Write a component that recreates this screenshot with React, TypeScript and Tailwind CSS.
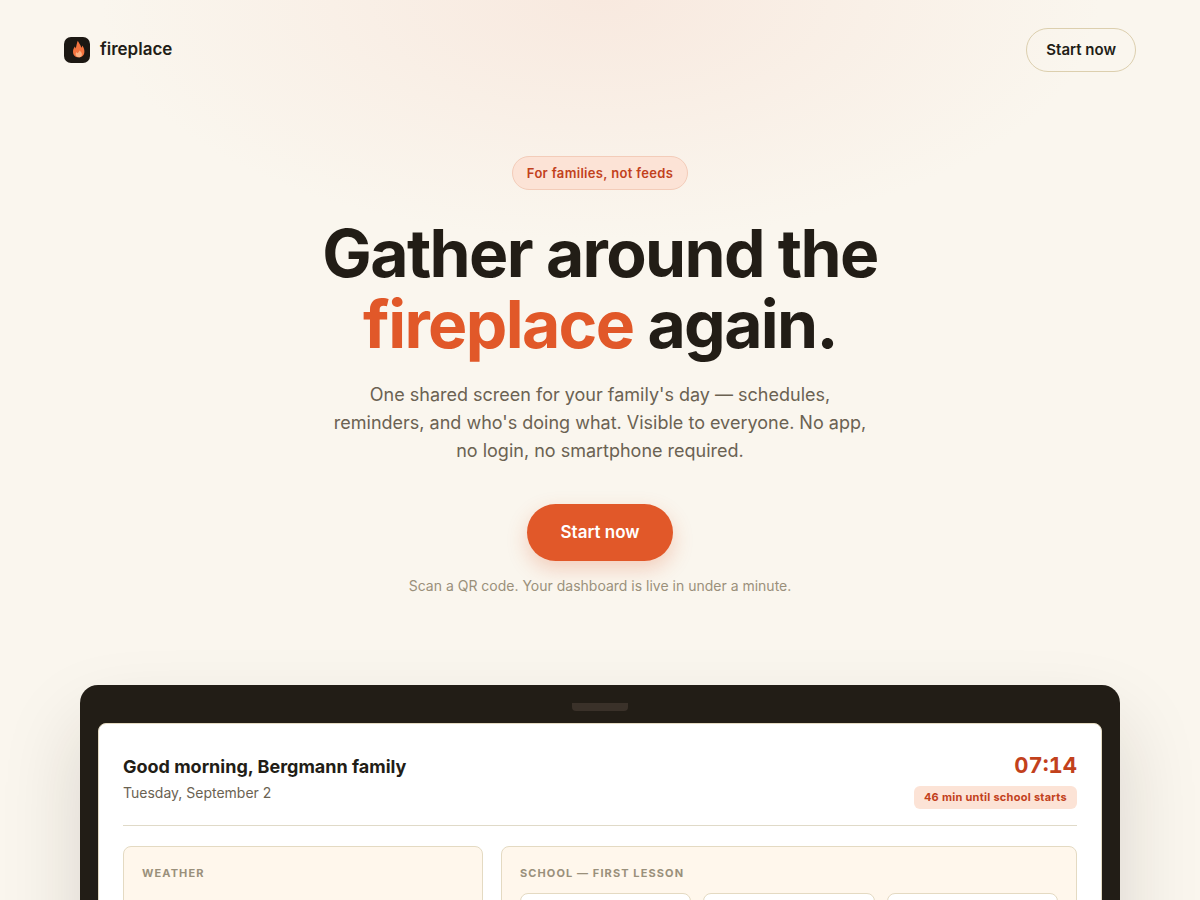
import React from 'react';

// --- Logo ---
function FlameLogo() {
  return (
    <svg className="size-[26px] shrink-0" viewBox="0 0 26 26" aria-hidden="true">
      <rect width="26" height="26" rx="7" fill="#1c1813" />
      <path
        d="M13.8 3.8C15 6.4 16.8 8 17.3 10.8C17.9 10.2 18.2 9.4 18.2 8.4C19.8 10.2 20.4 12.4 20.4 14.4C20.4 18 18.2 20.3 14.6 20.3C11.2 20.3 9 18 9 14.7C9 12.6 10 11 10.9 9.6C11.2 10.4 11.4 11 11.8 11.4C12.4 8.8 12.8 6 13.8 3.8Z"
        fill="#f4743f"
      />
      <path
        d="M15.4 13.4C15.2 14.8 14.3 15.2 13.5 16.2C13.1 15.9 12.8 15.5 12.6 15C11.8 15.9 11.5 16.8 11.7 17.8C12.1 19.3 13.2 20.3 14.8 20.3C16.6 20.3 17.8 19.2 17.9 17.4C18 15.8 16.8 14.4 15.4 13.4Z"
        fill="#fbb283"
      />
    </svg>
  );
}

// --- Header ---
function Header() {
  return (
    <header className="relative flex items-center justify-between px-16 py-7">
      <a href="#" className="flex items-center gap-2.5 text-[17px] font-semibold">
        <FlameLogo />
        fireplace
      </a>
      <button className="h-11 rounded-full border border-[#dccfae] px-[19px] text-[15px] font-semibold">
        Start now
      </button>
    </header>
  );
}

// --- Hero ---
function Hero() {
  return (
    <section className="relative flex flex-col items-center px-6 pt-14 text-center">
      <span className="rounded-full border border-[#f3ccb9] bg-[#fce3d6] px-3.5 py-1.5 text-[13px] leading-5 font-semibold tracking-wide text-[#c2411c]">
        For families, not feeds
      </span>
      <h1 className="mt-7 max-w-[760px] text-[66px] leading-[71px] font-bold tracking-tight">
        Gather around the
        <br />
        <span className="text-[#e15829]">fireplace</span> again.
      </h1>
      <p className="mt-[21px] max-w-[540px] text-[18px] leading-7 text-[#6b6252]">
        One shared screen for your family's day — schedules, reminders, and who's doing what. Visible to everyone. No
        app, no login, no smartphone required.
      </p>
      <button className="mt-[39px] h-[57px] rounded-full bg-[#e15829] px-[33px] text-[17px] font-semibold text-white shadow-[0_8px_20px_rgba(225,88,41,0.25)]">
        Start now
      </button>
      <p className="mt-[15px] text-[14px] leading-5 text-[#9a907b]">
        Scan a QR code. Your dashboard is live in under a minute.
      </p>
    </section>
  );
}

// --- Dashboard cards ---
interface CardProps {
  label: string;
  children?: React.ReactNode;
}

function Card({ label, children }: CardProps) {
  return (
    <div className="min-h-[180px] rounded-lg border border-[#e4dac2] bg-[#fff7ec] p-[18px]">
      <h3 className="text-[11px] leading-4 font-bold tracking-widest text-[#9a907b] uppercase">{label}</h3>
      {children}
    </div>
  );
}

function Dashboard() {
  return (
    <section className="relative mt-[89px] px-20">
      <div className="mx-auto max-w-[1040px] rounded-[18px] bg-[#221d16] p-[18px] shadow-[0_40px_80px_rgba(34,29,22,0.15)]">
        {/* Camera notch */}
        <div className="mx-auto mb-3 h-2 w-14 rounded-b bg-[#3a3129]" />

        {/* Screen */}
        <div className="rounded-lg border border-[#e4dac2] bg-white p-6">
          <div className="flex items-center justify-between border-b border-[#e0dac8] pb-4">
            <div>
              <h2 className="text-[18px] leading-7 font-bold">Good morning, Bergmann family</h2>
              <p className="text-[14px] leading-6 text-[#6b6252]">Tuesday, September 2</p>
            </div>
            <div className="flex flex-col items-end gap-1">
              <span className="text-[22px] leading-[34px] font-bold text-[#c2411c] tabular-nums">07:14</span>
              <span className="rounded-md bg-[#fce3d6] px-2.5 py-[3px] text-[11px] leading-[17px] font-bold tracking-wide text-[#c2411c]">
                46 min until school starts
              </span>
            </div>
          </div>

          <div className="mt-5 grid grid-cols-[5fr_8fr] gap-[18px]">
            <Card label="Weather" />
            <Card label="School — first lesson">
              <div className="mt-3 grid grid-cols-3 gap-3">
                {[0, 1, 2].map((slot) => (
                  <div key={slot} className="h-24 rounded-lg border border-[#e4dac2] bg-white" />
                ))}
              </div>
            </Card>
          </div>
        </div>
      </div>
    </section>
  );
}

export default function App() {
  return (
    <main className="h-screen overflow-hidden bg-[#faf6ee] bg-[radial-gradient(ellipse_500px_240px_at_50%_0,#f8e9df,#faf6ee)] font-['Inter',sans-serif] text-[#221d16]">
      <Header />
      <Hero />
      <Dashboard />
    </main>
  );
}
